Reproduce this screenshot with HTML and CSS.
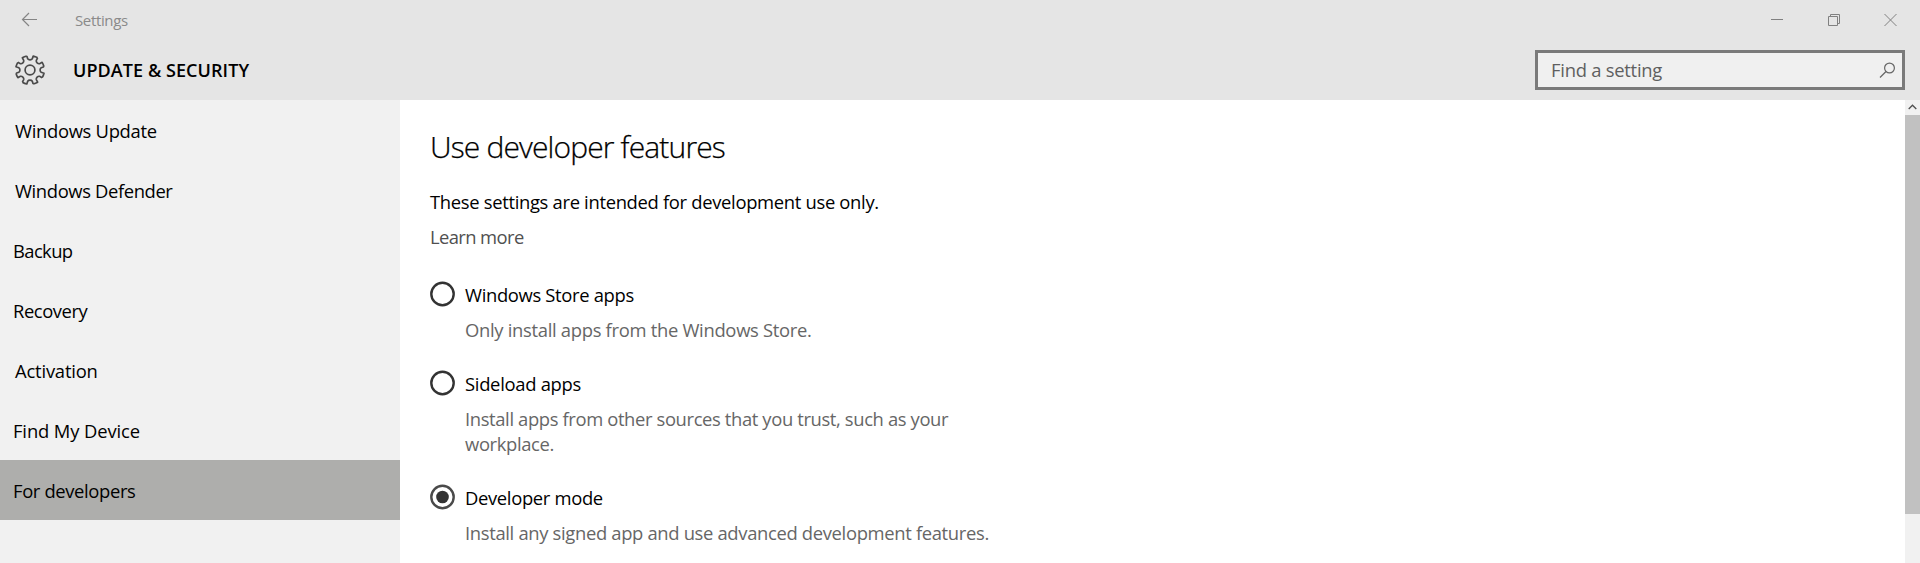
FILE: index.html
```
<!DOCTYPE html>
<html lang="en">
<head>
<meta charset="utf-8">
<title>Settings</title>
<link rel="stylesheet" href="styles.css">
</head>
<body>
<div class="window">
  <header class="header">
    <div class="titlebar">
      <svg class="back" width="18" height="16" viewBox="0 0 18 16"><path d="M16 7.5H1.5M8 1L1.5 7.5L8 14"/></svg>
      <span class="app-title">Settings</span>
      <div class="controls">
        <svg width="12" height="14" viewBox="0 0 12 14"><path d="M0 6.5H12"/></svg>
        <svg width="12" height="14" viewBox="0 0 12 14"><path d="M0.5 3.5H9.5V12.5H0.5ZM2.5 3.5V1.5H11.5V10.5H9.5"/></svg>
        <svg width="13" height="14" viewBox="0 0 13 14"><path d="M0.5 1L12.5 13M12.5 1L0.5 13"/></svg>
      </div>
    </div>
    <div class="section-bar">
      <svg class="gear" width="32" height="32" viewBox="-16 -16 32 32">
        <defs><path id="tooth" d="M-3.2 -14L-2.3 -11.2Q-1.6 -10.1 0 -10.1T2.3 -11.2L3.2 -14Q5.4 -13.5 7.64 -12.16"/></defs>
        <use href="#tooth"/><use href="#tooth" transform="rotate(45)"/><use href="#tooth" transform="rotate(90)"/><use href="#tooth" transform="rotate(135)"/><use href="#tooth" transform="rotate(180)"/><use href="#tooth" transform="rotate(225)"/><use href="#tooth" transform="rotate(270)"/><use href="#tooth" transform="rotate(315)"/>
        <circle r="4.9"/>
      </svg>
      <h1 class="section-title">UPDATE &amp; SECURITY</h1>
      <div class="search">
        <span class="search-text">Find a setting</span>
        <svg width="17" height="17" viewBox="0 0 17 17"><circle cx="10.5" cy="6" r="4.9"/><path d="M7 9.5L1 15.5"/></svg>
      </div>
    </div>
  </header>
  <div class="body">
    <nav class="sidebar">
      <a class="item nav-update">Windows Update</a>
      <a class="item nav-defender">Windows Defender</a>
      <a class="item nav-backup">Backup</a>
      <a class="item nav-recovery">Recovery</a>
      <a class="item nav-activation">Activation</a>
      <a class="item nav-find">Find My Device</a>
      <a class="item nav-dev selected">For developers</a>
    </nav>
    <main class="content">
      <h2 class="page-title">Use developer features</h2>
      <p class="intro">These settings are intended for development use only.</p>
      <a class="learn">Learn more</a>
      <div class="option">
        <svg class="radio" width="25" height="26" viewBox="0 0 25 26"><circle cx="12.5" cy="13" r="11.2"/></svg>
        <div class="option-text">
          <div class="label">Windows Store apps</div>
          <div class="desc desc-store">Only install apps from the Windows Store.</div>
        </div>
      </div>
      <div class="option">
        <svg class="radio" width="25" height="26" viewBox="0 0 25 26"><circle cx="12.5" cy="13" r="11.2"/></svg>
        <div class="option-text">
          <div class="label label-side">Sideload apps</div>
          <div class="desc desc-side">Install apps from other sources that you trust, such as your<br>workplace.</div>
        </div>
      </div>
      <div class="option">
        <svg class="radio checked" width="25" height="26" viewBox="0 0 25 26"><circle cx="12.5" cy="13" r="11.2"/><circle class="dot" cx="12.5" cy="13" r="6.3"/></svg>
        <div class="option-text">
          <div class="label">Developer mode</div>
          <div class="desc desc-dev">Install any signed app and use advanced development features.</div>
        </div>
      </div>
    </main>
    <div class="scrollbar">
      <div class="scroll-up"><svg width="9" height="6" viewBox="0 0 9 6"><path d="M0.7 5L4.5 1.2L8.3 5"/></svg></div>
      <div class="thumb"></div>
    </div>
  </div>
</div>
</body>
</html>
```
FILE: styles.css
```
* { box-sizing: border-box; }
body {
  margin: 0;
  font: 18.4px/25px "Open Sans", "Noto Sans", sans-serif;
  letter-spacing: -0.33px;
  color: #000;
  overflow: hidden;
}
h1, h2, p { margin: 0; }
svg { display: block; fill: none; stroke: #808080; }
.window { display: flex; flex-direction: column; height: 563px; }

.header { height: 100px; background: #e5e5e5; }
.titlebar { display: flex; align-items: center; height: 40px; padding: 0 23px 0 21px; }
.back { stroke: #858585; stroke-width: 1.2; }
.app-title { margin-left: 36px; font-size: 15px; line-height: 20px; letter-spacing: -0.36px; color: #8a8a8a; padding-bottom: 1px; }
.controls { display: flex; gap: 45px; margin-left: auto; }
.controls svg:last-child { margin-left: -1px; }

.section-bar { display: flex; align-items: center; height: 60px; padding: 0 15px 0 14px; }
.gear { stroke: #4a4a4a; stroke-width: 1.7; stroke-linejoin: round; }
.section-title { margin-left: 27px; font-size: 18px; font-weight: 600; line-height: 25px; letter-spacing: 0.07px; }
.search {
  display: flex;
  align-items: center;
  justify-content: space-between;
  width: 370px;
  height: 40px;
  margin-left: auto;
  padding: 0 6px 0 13px;
  border: 3px solid #7a7a7a;
  background: #f0f0f0;
}
.search-text { padding-bottom: 2px; color: #5f5f5f; letter-spacing: -0.25px; }
.search svg { stroke: #666; stroke-width: 1.2; }

.body { display: flex; flex: 1; min-height: 0; }
.sidebar { width: 400px; background: #f1f1f1; }
.item { display: block; height: 60px; padding: 18px 0 0 13px; }
.nav-update { padding-left: 15px; letter-spacing: -0.31px; }
.nav-defender { padding-left: 15px; letter-spacing: -0.38px; }
.nav-backup { letter-spacing: -0.6px; }
.nav-recovery { letter-spacing: -0.43px; }
.nav-activation { padding-left: 15px; letter-spacing: -0.19px; }
.nav-find { letter-spacing: -0.12px; }
.nav-dev { letter-spacing: -0.36px; }
.selected { background: #aeaeac; }

.content { flex: 1; padding: 27px 30px 0; background: #fff; }
.page-title { font-size: 30px; font-weight: 300; line-height: 40px; letter-spacing: -0.86px; -webkit-text-stroke: 0.25px #000; }
.intro { margin-top: 22px; letter-spacing: -0.315px; }
.learn { display: block; margin: 10px 0 33px; letter-spacing: -0.6px; color: #505050; }
.option { display: flex; gap: 10px; margin-bottom: 29px; }
.radio { margin-top: -1px; stroke: #333; stroke-width: 2.4; }
.checked { stroke: #4a4a4a; }
.dot { fill: #333; stroke: none; }
.label-side { letter-spacing: -0.29px; }
.desc { margin-top: 10px; color: #666; }
.desc-store { letter-spacing: -0.3px; }
.desc-side { letter-spacing: -0.37px; }

.scrollbar { width: 15px; background: #f1f1f1; }
.scroll-up { display: grid; place-items: center; height: 15px; padding-bottom: 2px; }
.scroll-up svg { stroke: #505050; stroke-width: 1.3; }
.thumb { height: 399px; background: #c1c1c1; }
```
